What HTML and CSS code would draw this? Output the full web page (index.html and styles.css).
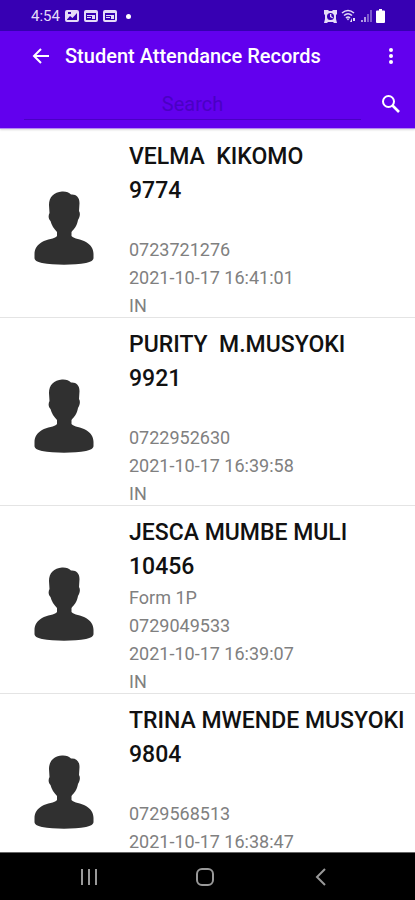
FILE: index.html
```html
<!DOCTYPE html>
<html lang="en">
<head>
<meta charset="UTF-8">
<meta name="viewport" content="width=device-width, initial-scale=1.0">
<title>Student Attendance Records</title>
<link rel="stylesheet" href="styles.css">
</head>
<body>
<svg class="defs" aria-hidden="true">
    <symbol id="person" viewBox="0 0 60 74">
        <path d="M28 0.500C32 0.200 35 1.500 37 3.500C42 3 45.500 6 45.500 12L45 20C46.500 22 46 26 44 29C43 35 40 38 37.500 41V45C40 48 47 48 52 51C57 54 59.500 58 59.500 63V67C59.500 69 57 71 52 72C40 74.200 20 74.200 8 72C3 71 0.500 69 0.500 67V63C0.500 58 3 54 8 51C13 48 21 48 23 45V41C20 38 17.500 34 16.500 30C14.500 28 14 25 15.500 22L15 14C15 6 20 1 28 0.500Z"/>
    </symbol>
    <symbol id="card" viewBox="0 0 14 12">
        <path fill-rule="evenodd" d="M2 0H12Q14 0 14 2V10Q14 12 12 12H2Q0 12 0 10V2Q0 0 2 0ZM2 3V10H12V3ZM3 5H8V6H3ZM3 7H7V8H3ZM8 5H11V9H8Z"/>
    </symbol>
</svg>

<div class="status-bar">
    <div class="status-group">
        <span class="clock">4:54</span>
        <svg width="14" height="12" viewBox="0 0 14 12"><path fill-rule="evenodd" d="M2 0H12Q14 0 14 2V10Q14 12 12 12H2Q0 12 0 10V2Q0 0 2 0ZM2 9.500L5 6L7.500 8L12 3V10H2ZM3 2V4H6V2Z"/></svg>
        <svg width="14" height="12"><use href="#card"/></svg>
        <svg width="14" height="12"><use href="#card"/></svg>
        <span class="dot"></span>
    </div>
    <div class="status-group status-right">
        <svg width="13" height="13" viewBox="0 0 13 13"><path fill-rule="evenodd" d="M0 0H4L5 1H8L9 0H13V4L12 5V9L13 13H10L9 12H4L3 13H0L1 9V5L0 4ZM6.500 3A3.500 3.500 0 1 0 6.500 10A3.500 3.500 0 1 0 6.500 3ZM6 4H7.300V6.300L9 7.300L8.400 8.300L6 7Z"/></svg>
        <svg width="16" height="14" viewBox="0 0 16 14"><path fill="none" stroke="#e4dcf8" stroke-width="1.600" d="M1 4Q7 -1 13 4M3 6.500Q7 3 11 6.500M5 9Q7 7 9 9"/><path d="M5.500 9.500H8.500L7 11.500ZM9 13L11 9V13ZM12 9H14V12H12Z"/></svg>
        <svg width="11" height="12" viewBox="0 0 11 12"><path opacity="0.700" d="M0 10H2V12H0ZM3 7H5V12H3Z"/><path opacity="0.400" d="M6 4H8V12H6ZM9 0H11V12H9Z"/></svg>
        <svg class="battery" width="9" height="14" viewBox="0 0 9 14"><path d="M3 0H6V1.500H8Q9 1.500 9 2.500V13Q9 14 8 14H1Q0 14 0 13V2.500Q0 1.500 1 1.500H3Z"/></svg>
    </div>
</div>

<header class="app-bar">
    <div class="toolbar">
        <button class="icon-btn back" aria-label="Back">
            <svg width="18" height="16" viewBox="0 0 18 16"><path d="M17 8H2M9 1L2 8L9 15" fill="none" stroke="#fff" stroke-width="2"/></svg>
        </button>
        <h1>Student Attendance Records</h1>
        <button class="icon-btn" aria-label="More options">
            <svg width="6" height="18" viewBox="0 0 6 18"><circle cx="3" cy="3" r="2"/><circle cx="3" cy="9" r="2"/><circle cx="3" cy="15" r="2"/></svg>
        </button>
    </div>
    <form class="search" onsubmit="return false">
        <input type="text" placeholder="Search" aria-label="Search">
        <button class="icon-btn" aria-label="Search records">
            <svg width="20" height="20" viewBox="0 0 20 20" fill="none" stroke="#fff"><circle cx="7.500" cy="7.500" r="5.500" stroke-width="2"/><path d="M11.500 11.500L18 18" stroke-width="2.600"/></svg>
        </button>
    </form>
</header>

<ul class="records">
    <li class="record">
        <svg class="avatar"><use href="#person"/></svg>
        <div class="info">
            <h2>VELMA  KIKOMO</h2>
            <h2>9774</h2>
            <p></p>
            <p>0723721276</p>
            <p>2021-10-17 16:41:01</p>
            <p>IN</p>
        </div>
    </li>
    <li class="record">
        <svg class="avatar"><use href="#person"/></svg>
        <div class="info">
            <h2>PURITY  M.MUSYOKI</h2>
            <h2>9921</h2>
            <p></p>
            <p>0722952630</p>
            <p>2021-10-17 16:39:58</p>
            <p>IN</p>
        </div>
    </li>
    <li class="record">
        <svg class="avatar"><use href="#person"/></svg>
        <div class="info">
            <h2>JESCA MUMBE MULI</h2>
            <h2>10456</h2>
            <p>Form 1P</p>
            <p>0729049533</p>
            <p>2021-10-17 16:39:07</p>
            <p>IN</p>
        </div>
    </li>
    <li class="record">
        <svg class="avatar"><use href="#person"/></svg>
        <div class="info">
            <h2>TRINA MWENDE MUSYOKI</h2>
            <h2>9804</h2>
            <p></p>
            <p>0729568513</p>
            <p>2021-10-17 16:38:47</p>
        </div>
    </li>
</ul>

<nav class="nav-bar">
    <button class="icon-btn" aria-label="Recent apps">
        <svg width="18" height="18" viewBox="0 0 18 18"><path d="M2 1V17M9 1V17M16 1V17"/></svg>
    </button>
    <button class="icon-btn" aria-label="Home">
        <svg width="20" height="20" viewBox="0 0 20 20"><rect x="2" y="2" width="16" height="16" rx="5"/></svg>
    </button>
    <button class="icon-btn" aria-label="Back">
        <svg width="18" height="18" viewBox="0 0 18 18"><path d="M13 1L5 9L13 17"/></svg>
    </button>
</nav>
</body>
</html>
```
FILE: styles.css
```css
* {
    box-sizing: border-box;
}

body {
    display: flex;
    flex-direction: column;
    height: 100vh;
    margin: 0;
    font-family: Roboto, "Liberation Sans", sans-serif;
    background-color: #fff;
    overflow: hidden;
}

h1, h2, p, ul {
    margin: 0;
    padding: 0;
}

svg {
    display: block;
    flex-shrink: 0;
}

.defs {
    position: absolute;
    width: 0;
    height: 0;
}

.status-bar {
    display: flex;
    flex-shrink: 0;
    justify-content: space-between;
    align-items: center;
    padding: 1px 30px 0 31px;
    height: 31px;
    background-color: #3700b3;
    color: #e4dcf8;
    fill: #e4dcf8;
}

.status-group {
    display: flex;
    align-items: center;
    gap: 5px;
}

.status-right {
    gap: 4px;
}

.clock {
    font-size: 15px;
    line-height: 16px;
}

.dot {
    width: 5px;
    height: 5px;
    margin-left: 4px;
    border-radius: 50%;
    background-color: #fff;
}

.battery {
    fill: #fff;
}

.app-bar {
    flex-shrink: 0;
    padding-top: 1px;
    background-color: #6200ee;
    border-bottom: 1px solid #b58af2;
    box-shadow: 0 1px 2px rgba(0, 0, 0, 0.15);
}

.icon-btn {
    display: flex;
    justify-content: center;
    align-items: center;
    width: 48px;
    height: 48px;
    padding: 0;
    border: none;
    background: none;
    fill: #fff;
    cursor: pointer;
}

.toolbar {
    display: flex;
    align-items: center;
    padding-left: 17px;
}

.toolbar h1 {
    flex: 1;
    font-size: 20px;
    font-weight: 500;
    line-height: 28px;
    color: #fff;
    white-space: nowrap;
}

.search {
    display: flex;
    align-items: center;
    padding-left: 24px;
}

.search input {
    flex: 1;
    min-width: 0;
    height: 32px;
    margin-right: 6px;
    padding: 0;
    border: none;
    border-bottom: 1px solid #4a00c4;
    outline: none;
    background: none;
    font-family: inherit;
    font-size: 20px;
    text-align: center;
    color: #fff;
}

.search input::placeholder {
    color: #4a00c4;
    opacity: 1;
}

.records {
    flex: 1;
    min-height: 0;
    padding-top: 1px;
    list-style: none;
    overflow: hidden;
}

.record {
    display: flex;
    align-items: center;
    gap: 35px;
    padding: 13px 8px 0 34px;
    border-bottom: 1px solid #e4e4e4;
}

.avatar {
    width: 60px;
    height: 74px;
    margin-bottom: 4px;
    fill: #303030;
}

.info {
    display: grid;
    grid-template-rows: 28px 28px repeat(4, 22px);
    gap: 6px;
    white-space: pre;
}

.info h2 {
    font-size: 23px;
    font-weight: 500;
    line-height: 28px;
    color: #111;
}

.info p {
    font-size: 18px;
    line-height: 22px;
    color: #808080;
}

.nav-bar {
    display: flex;
    flex-shrink: 0;
    justify-content: space-around;
    align-items: center;
    padding: 0 36px 0 31px;
    border-top: 1px solid #666;
    background-color: #000;
}

.nav-bar .icon-btn {
    height: 47px;
}

.nav-bar svg {
    fill: none;
    stroke: #999;
    stroke-width: 2;
}
```
